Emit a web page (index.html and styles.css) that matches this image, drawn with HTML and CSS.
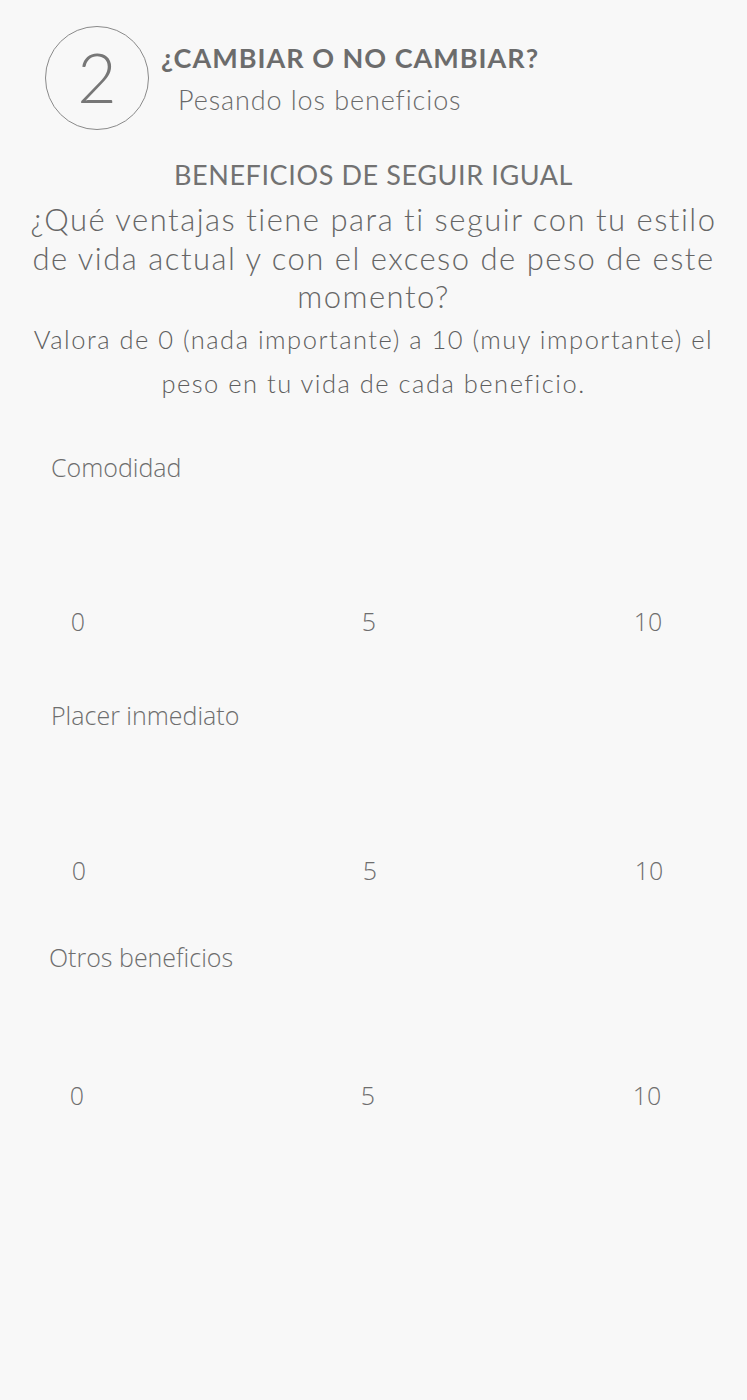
FILE: index.html
```html
<!DOCTYPE html>
<html lang="es">
<head>
<meta charset="utf-8">
<title>¿Cambiar o no cambiar?</title>
<link rel="stylesheet" href="styles.css">
</head>
<body>
<div class="page">
  <header class="header">
    <div class="step">2</div>
    <div class="header-text">
      <h1 class="title">¿CAMBIAR O NO CAMBIAR?</h1>
      <p class="subtitle">Pesando los beneficios</p>
    </div>
  </header>

  <section class="intro">
    <h2 class="section-title">BENEFICIOS DE SEGUIR IGUAL</h2>
    <p class="question">¿Qué ventajas tiene para ti seguir con tu estilo de vida actual y con el exceso de peso de este momento?</p>
    <p class="hint">Valora de 0 (nada importante) a 10 (muy importante) el peso en tu vida de cada beneficio.</p>
  </section>

  <section class="rating rating-1">
    <div class="rating-label">Comodidad</div>
    <div class="scale">
      <span class="tick">0</span>
      <span class="tick tick-mid">5</span>
      <span class="tick tick-end">10</span>
    </div>
  </section>

  <section class="rating rating-2">
    <div class="rating-label">Placer inmediato</div>
    <div class="scale">
      <span class="tick">0</span>
      <span class="tick tick-mid">5</span>
      <span class="tick tick-end">10</span>
    </div>
  </section>

  <section class="rating rating-3">
    <div class="rating-label">Otros beneficios</div>
    <div class="scale">
      <span class="tick">0</span>
      <span class="tick tick-mid">5</span>
      <span class="tick tick-end">10</span>
    </div>
  </section>
</div>
</body>
</html>
```

FILE: styles.css
```css
html, body {
  margin: 0;
  padding: 0;
  background: #f8f8f8;
}

body {
  font-family: Lato, "Open Sans", sans-serif;
  color: #6e6e6e;
}

.page {
  width: 747px;
  min-height: 1400px;
}

.header {
  display: flex;
  align-items: flex-start;
  padding-top: 26px;
  padding-left: 45px;
}

.step {
  box-sizing: border-box;
  width: 104px;
  height: 104px;
  border: 1px solid #8a8a8a;
  border-radius: 50%;
  display: flex;
  align-items: center;
  justify-content: center;
  font-family: Lato, sans-serif;
  font-weight: 300;
  font-size: 68px;
  color: #777;
  line-height: 1;
  padding-bottom: 2px;
}

.header-text {
  margin-left: 12px;
  padding-top: 15px;
}

.title {
  margin: 0;
  font-size: 27px;
  font-weight: 700;
  line-height: 34px;
  color: #6c6c6c;
  letter-spacing: 1px;
}

.subtitle {
  margin: 8px 0 0 17px;
  font-size: 27px;
  font-weight: 300;
  line-height: 34px;
  color: #6a6a6a;
  letter-spacing: 0.9px;
}

.intro {
  text-align: center;
  padding: 0 18px;
  margin-top: 27px;
}

.section-title {
  margin: 0;
  font-size: 27px;
  font-weight: 400;
  line-height: 36px;
  color: #727272;
  letter-spacing: 0.6px;
}

.question {
  margin: 7px 0 0;
  font-size: 31px;
  font-weight: 300;
  line-height: 38.5px;
  color: #666;
  letter-spacing: 1.5px;
}

.hint {
  margin: 1px 0 0;
  font-size: 25.5px;
  font-weight: 300;
  line-height: 44px;
  color: #5e5e5e;
  letter-spacing: 1.5px;
}

.rating-label {
  font-family: "Open Sans", sans-serif;
  font-weight: 300;
  font-size: 25px;
  line-height: 30px;
  color: #6e6e6e;
  padding-left: 51px;
}

.scale {
  display: flex;
  padding-left: 48px;
  font-family: "Open Sans", sans-serif;
  font-weight: 300;
  font-size: 25px;
  line-height: 30px;
  color: #6e6e6e;
}

.tick {
  width: 60px;
  text-align: center;
}

.tick-mid {
  margin-left: 231px;
}

.tick-end {
  margin-left: 219px;
}

.rating-1 {
  margin-top: 47px;
}
.rating-1 .scale {
  margin-top: 124px;
}

.rating-2 {
  margin-top: 64px;
}
.rating-2 .scale {
  margin-top: 125px;
  padding-left: 49px;
}

.rating-3 {
  margin-top: 57px;
}
.rating-3 .rating-label {
  padding-left: 49px;
}
.rating-3 .scale {
  margin-top: 108px;
  padding-left: 47px;
}
```
